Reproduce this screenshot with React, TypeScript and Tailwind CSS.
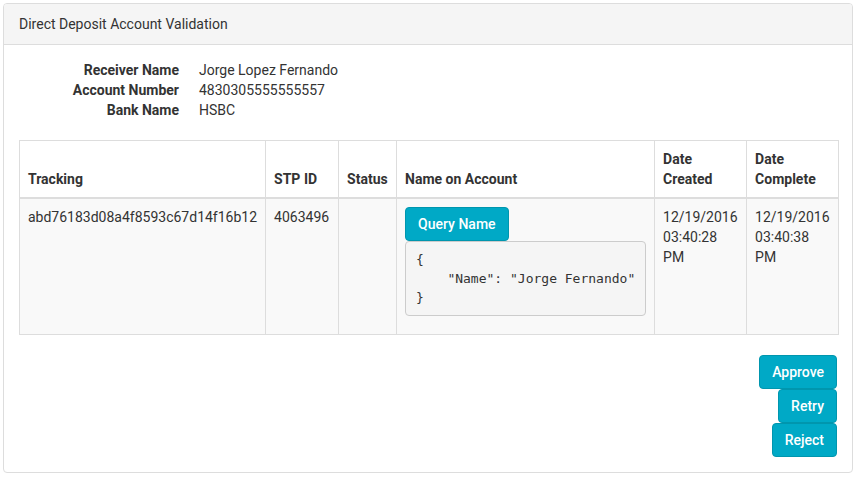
import React from "react";

const btn =
  "inline-block rounded-[4px] border border-[#0096ae] bg-[#00a9c6] px-3 text-white text-[14px] leading-[20px] py-[6px] font-medium";

export default function App() {
  return (
    <div
      className="w-[857px] h-[477px] bg-white pl-[3px] pt-[3px] text-[#333] text-[14px] leading-[20px]"
      style={{ fontFamily: "Roboto, 'Liberation Sans', sans-serif" }}
    >
      <div className="w-[850px] h-[470px] rounded-[4px] border border-[#ddd] bg-white">
        <div className="h-[41px] border-b border-[#ddd] bg-[#f5f5f5] px-[15px] pt-[10px] rounded-t-[3px]">
          Direct Deposit Account Validation
        </div>
        <div className="px-[15px] pt-[15px] pb-[15px]">
          <div className="mb-[20px] grid grid-cols-[160px_1fr] gap-x-[20px]">
            <div className="text-right font-bold">Receiver Name</div>
            <div>Jorge Lopez Fernando</div>
            <div className="text-right font-bold">Account Number</div>
            <div>4830305555555557</div>
            <div className="text-right font-bold">Bank Name</div>
            <div>HSBC</div>
          </div>
          <table className="mb-[20px] w-[820px] border-collapse border border-[#ddd]">
            <thead>
              <tr className="align-bottom text-left font-bold">
                <th className="w-[246px] border border-b-2 border-[#ddd] p-[8px]">Tracking</th>
                <th className="w-[73px] border border-b-2 border-[#ddd] p-[8px]">STP ID</th>
                <th className="w-[58px] border border-b-2 border-[#ddd] p-[8px]">Status</th>
                <th className="w-[258px] border border-b-2 border-[#ddd] p-[8px]">Name on Account</th>
                <th className="w-[92px] border border-b-2 border-[#ddd] p-[8px]">
                  Date
                  <br />
                  Created
                </th>
                <th className="border border-b-2 border-[#ddd] p-[8px]">
                  Date
                  <br />
                  Complete
                </th>
              </tr>
            </thead>
            <tbody>
              <tr className="align-top bg-[#f9f9f9]">
                <td className="border border-[#ddd] p-[8px]">abd76183d08a4f8593c67d14f16b12</td>
                <td className="border border-[#ddd] p-[8px]">4063496</td>
                <td className="border border-[#ddd] p-[8px]"></td>
                <td className="border border-[#ddd] p-[8px] pb-[18px]">
                  <button className={btn}>Query Name</button>
                  <pre
                    className="mt-0 w-[241px] rounded-[4px] border border-[#ccc] bg-[#f5f5f5] px-[10px] py-[8px] text-[13px] leading-[19px] text-[#333]"
                    style={{ fontFamily: "'DejaVu Sans Mono', 'Liberation Mono', monospace" }}
                  >
                    {"{\n    \"Name\": \"Jorge Fernando\"\n}"}
                  </pre>
                </td>
                <td className="border border-[#ddd] p-[8px]">
                  12/19/2016
                  <br />
                  03:40:28
                  <br />
                  PM
                </td>
                <td className="border border-[#ddd] p-[8px]">
                  12/19/2016
                  <br />
                  03:40:38
                  <br />
                  PM
                </td>
              </tr>
            </tbody>
          </table>
          <div className="flex flex-col items-end">
            <button className={btn}>Approve</button>
            <button className={btn}>Retry</button>
            <button className={btn}>Reject</button>
          </div>
        </div>
      </div>
    </div>
  );
}
